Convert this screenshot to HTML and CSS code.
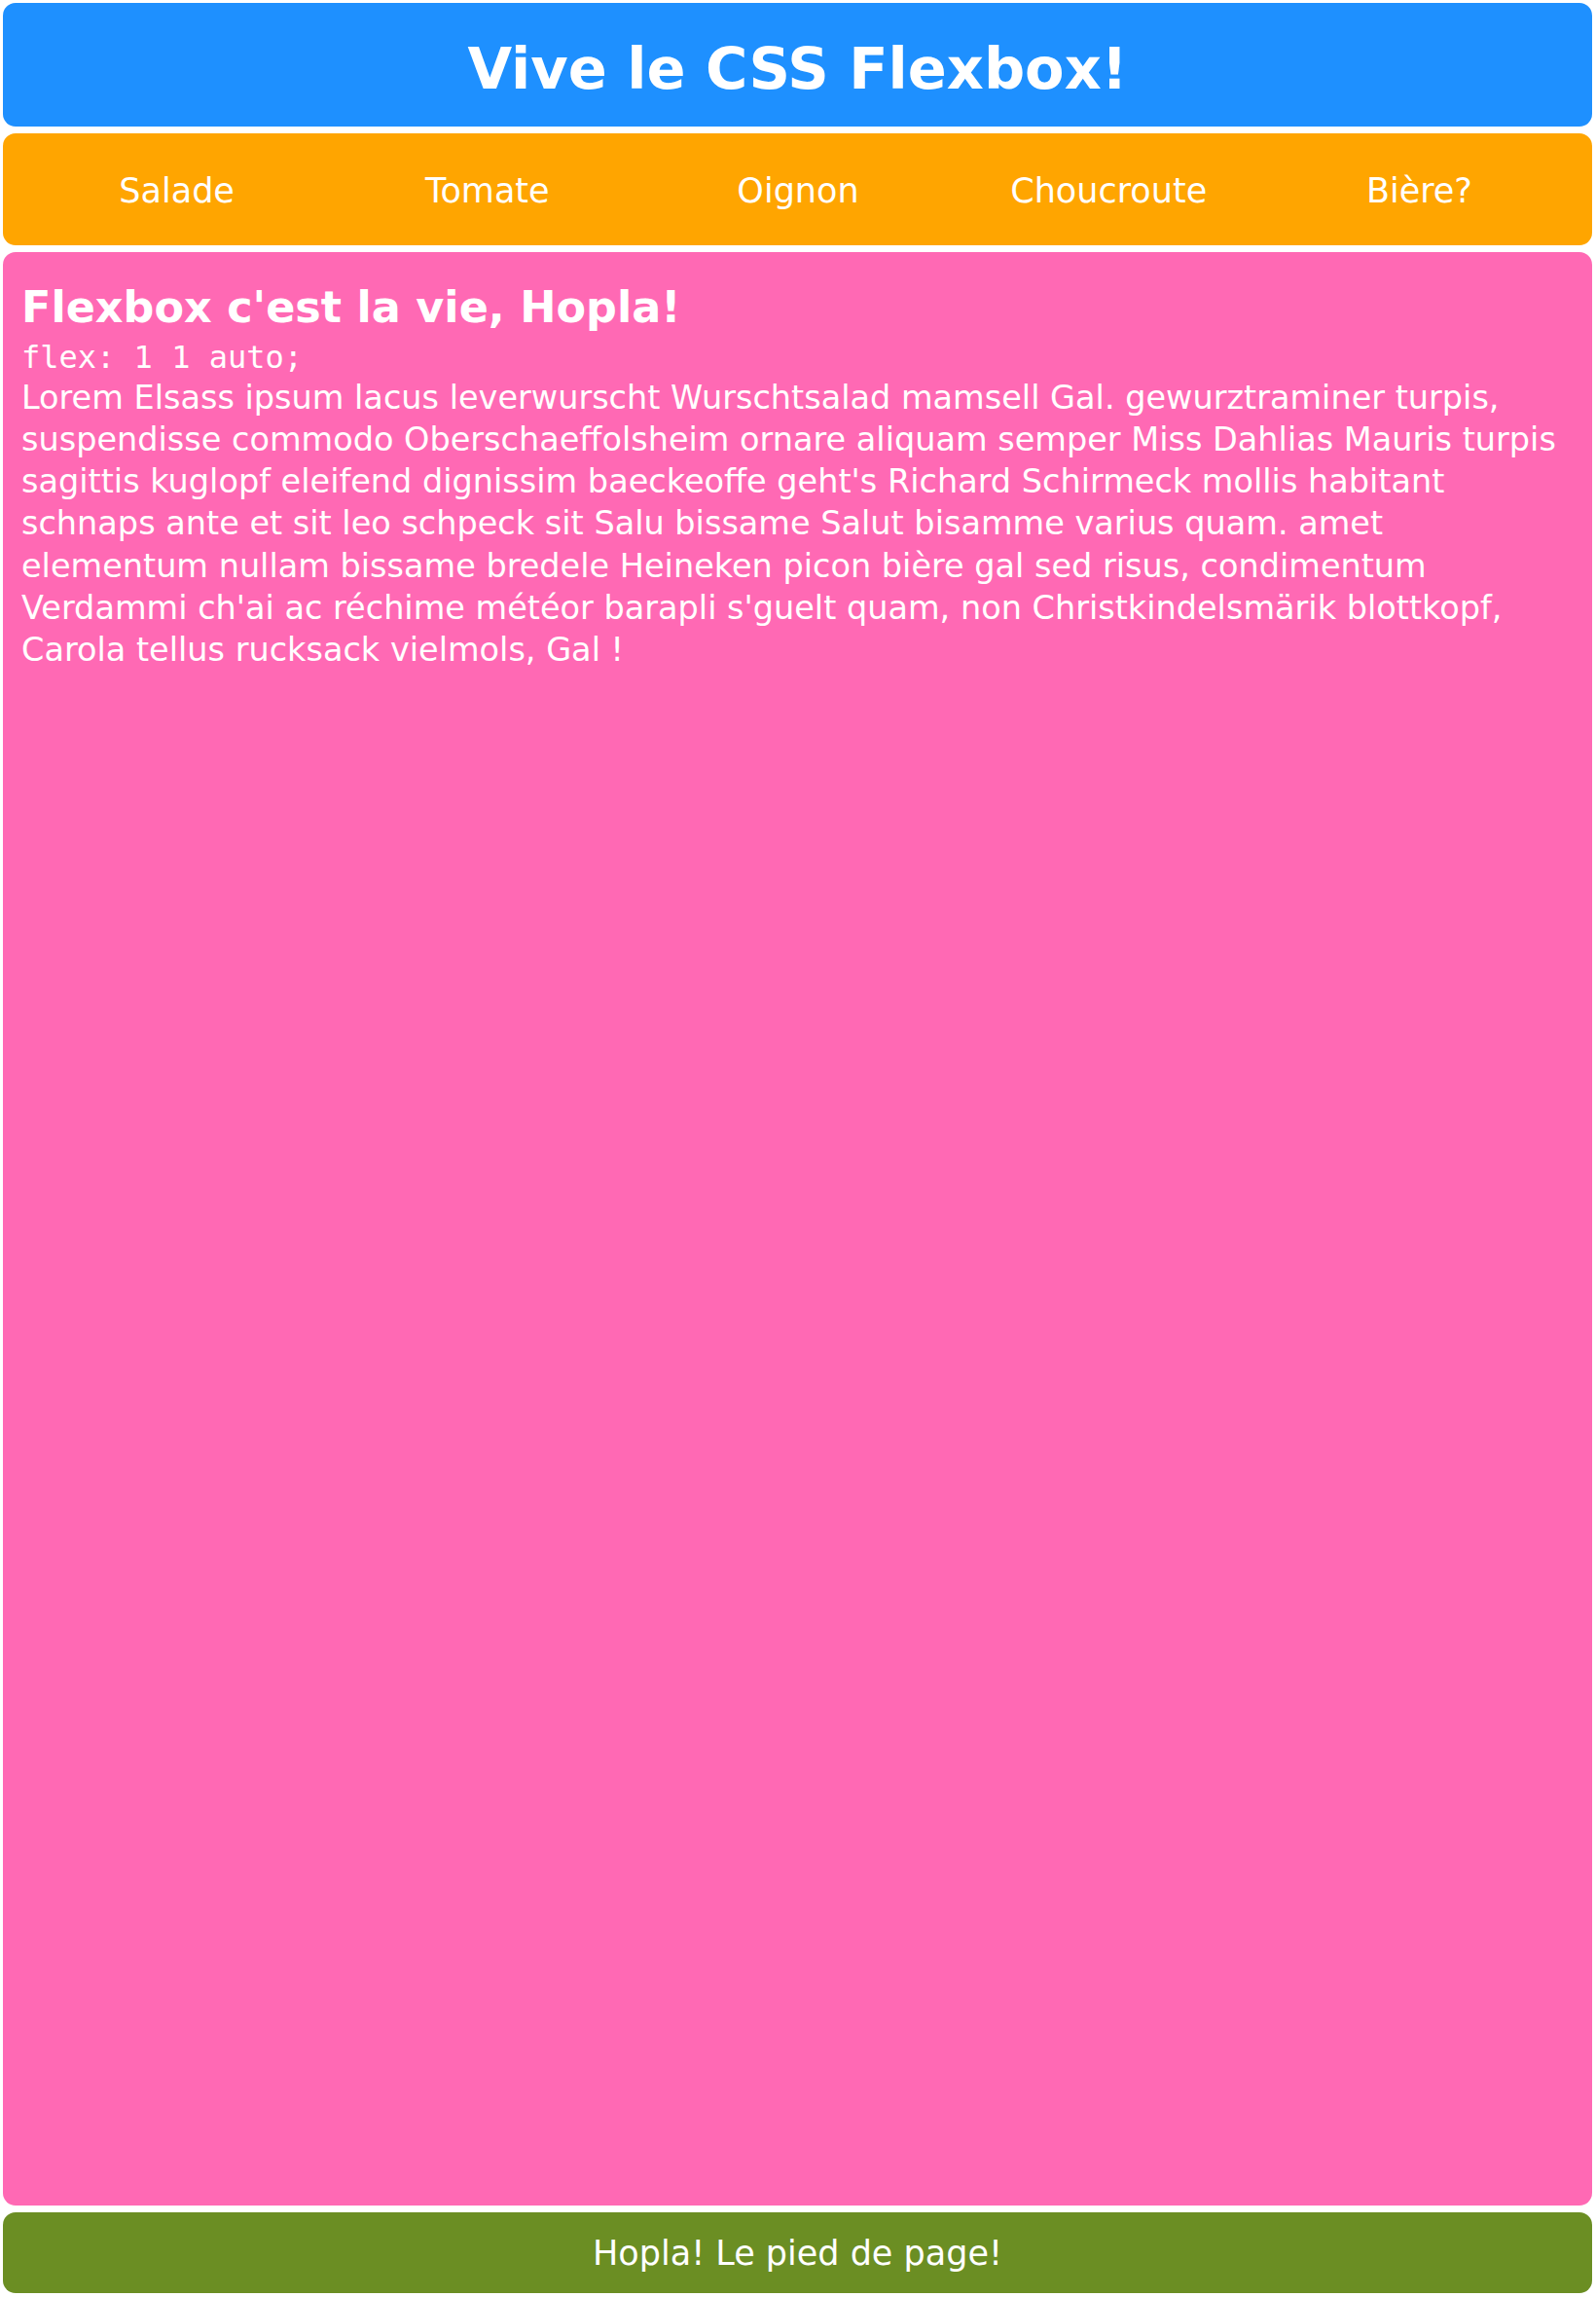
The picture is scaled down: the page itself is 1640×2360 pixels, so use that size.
FILE: index.html
```html
<!DOCTYPE html>
<html lang="fr">
<head>
<meta charset="utf-8">
<title>Vive le CSS Flexbox!</title>
<link rel="stylesheet" href="styles.css">
</head>
<body>
<div class="page">
  <header class="site-header">
    <h1 class="site-title">Vive le CSS Flexbox!</h1>
  </header>
  <nav class="site-nav">
    <a class="nav-item" href="#">Salade</a>
    <a class="nav-item" href="#">Tomate</a>
    <a class="nav-item" href="#">Oignon</a>
    <a class="nav-item" href="#">Choucroute</a>
    <a class="nav-item" href="#">Bière?</a>
  </nav>
  <main class="site-main">
    <h2 class="main-title">Flexbox c'est la vie, Hopla!</h2>
    <code class="rule">flex: 1 1 auto;</code>
    <p class="main-text">Lorem Elsass ipsum lacus leverwurscht Wurschtsalad mamsell Gal. gewurztraminer turpis, suspendisse commodo Oberschaeffolsheim ornare aliquam semper Miss Dahlias Mauris turpis sagittis kuglopf eleifend dignissim baeckeoffe geht's Richard Schirmeck mollis habitant schnaps ante et sit leo schpeck sit Salu bissame Salut bisamme varius quam. amet elementum nullam bissame bredele Heineken picon bière gal sed risus, condimentum Verdammi ch'ai ac réchime météor barapli s'guelt quam, non Christkindelsmärik blottkopf, Carola tellus rucksack vielmols, Gal !</p>
  </main>
  <footer class="site-footer">Hopla! Le pied de page!</footer>
</div>
</body>
</html>
```
FILE: styles.css
```css
* { box-sizing: border-box; }

html, body {
  margin: 0;
  padding: 0;
  background: #ffffff;
}

body {
  font-family: "DejaVu Sans", "Open Sans", sans-serif;
  color: #ffffff;
}

.page {
  display: flex;
  flex-direction: column;
  gap: 7px;
  min-height: 2360px;
  padding: 3px 4px 4px 3px;
}

.site-header,
.site-nav,
.site-main,
.site-footer {
  border-radius: 13px;
}

.site-header {
  flex: 0 0 127px;
  background: #1e90ff;
  display: flex;
  align-items: center;
  justify-content: center;
  padding-top: 8px;
}

.site-title {
  margin: 0;
  font-size: 59px;
  font-weight: 700;
  line-height: 1;
}

.site-nav {
  flex: 0 0 115px;
  background: #ffa500;
  display: flex;
  align-items: center;
  padding: 3px 18px 0 19px;
}

.nav-item {
  flex: 1 1 0;
  text-align: center;
  color: #ffffff;
  text-decoration: none;
  font-size: 35px;
  line-height: 1;
}

.site-main {
  flex: 1 1 auto;
  background: #ff69b4;
  padding: 24.6px 19px 20px 19px;
}

.main-title {
  margin: 0;
  font-size: 44.5px;
  font-weight: 700;
  line-height: 64px;
}

.rule {
  display: block;
  font-family: "DejaVu Sans Mono", monospace;
  font-size: 32px;
  line-height: 39.2px;
}

.main-text {
  margin: 0;
  font-size: 33.5px;
  line-height: 43.2px;
}

.site-footer {
  flex: 0 0 83px;
  background: #6b8e23;
  display: flex;
  align-items: center;
  justify-content: center;
  padding-top: 2px;
  font-size: 35px;
  line-height: 1;
}
```
